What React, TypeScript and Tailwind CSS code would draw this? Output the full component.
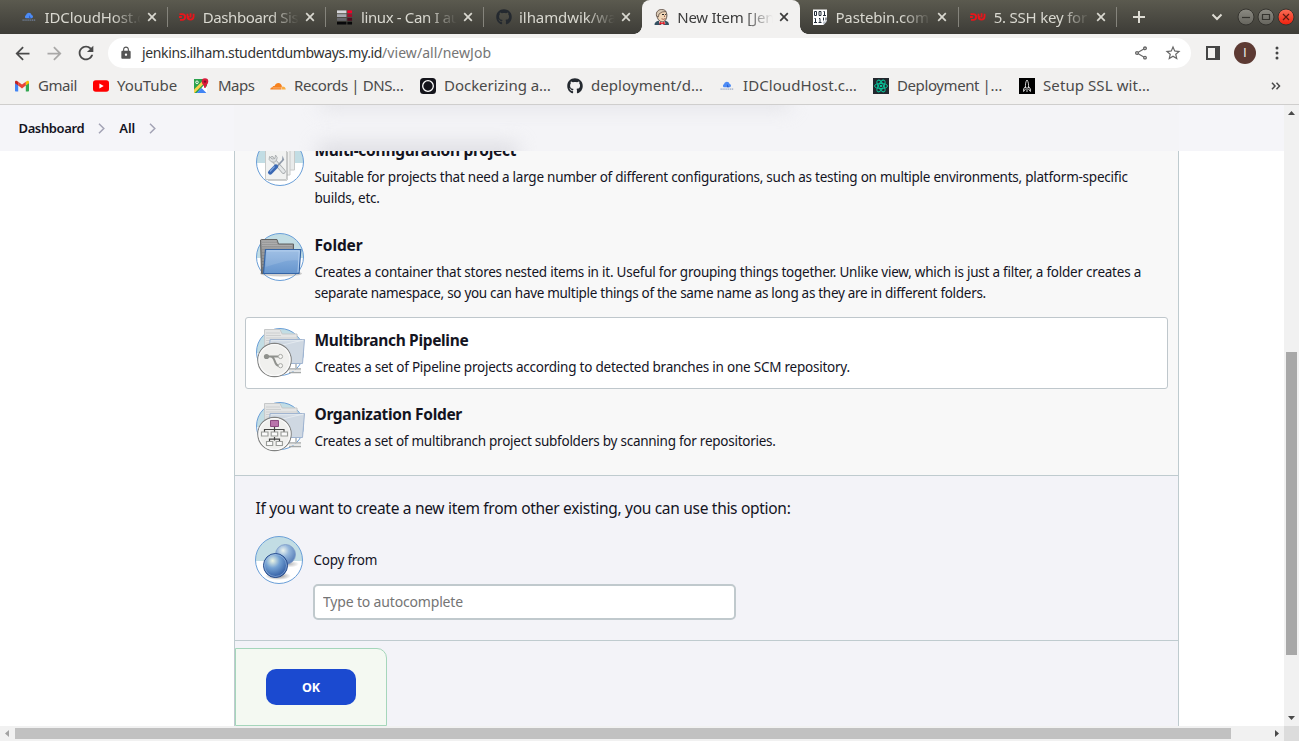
import type { ReactNode } from "react";
import { FaGithub } from "react-icons/fa";
import { MdArrowBack, MdArrowForward, MdLock, MdOutlineShare, MdRefresh, MdStarBorder } from "react-icons/md";

/* ---------- favicons ---------- */

const CloudHostIcon = () => (
  <svg width="16" height="16" viewBox="0 0 16 16">
    <path d="M4.800 9.200a1.700 1.700 0 0 1 .1-3A3 3 0 0 1 10.700 6a1.700 1.700 0 0 1 .3 3.200z" fill="#4c8bf5" />
    <path d="M8 6v3.200h2z" fill="#2a5fd0" />
    <path d="M1.500 11.200h13" stroke="#7d93b8" strokeWidth="1.800" strokeDasharray="1.300 .6" opacity=".55" />
  </svg>
);

const DumbwaysIcon = () => (
  <svg width="17" height="16" viewBox="0 0 17 16" fill="none" stroke="#e8151b" strokeWidth="1.900">
    <path d="M.5 5h3q3 0 3 3t-3 3H1M0 8h3" />
    <path d="M9 4.500v3q0 3.200 3.200 3.200t3.300-3.200v-3M12.300 4v4.500M9 7.800h2" />
  </svg>
);

const LinuxAskIcon = () => (
  <svg width="17" height="16" viewBox="0 0 17 16">
    <path d="M0 1h10v3H0z" fill="#d7d7dc" />
    <path d="M0 5h10v3H0z" fill="#a6a7ae" />
    <path d="M0 9h10v3H0z" fill="#66666b" />
    <path d="M0 13h10v3H0z" fill="#08080a" />
    <path d="M11 1h5v3h-5z" fill="#f5002a" />
    <path d="M11 5h5v3h-5z" fill="#a10d2a" />
    <path d="M11 9h5v3h-5z" fill="#491020" />
    <path d="M11 13h5v3h-5z" fill="#08080a" />
  </svg>
);

const JenkinsIcon = () => (
  <svg width="16" height="16" viewBox="0 0 16 16">
    <path d="M.5 16c0-2.500 1.500-3.600 4-4.200L11 11.600c2.500.7 4 1.900 4 4.400z" fill="#335061" />
    <path d="M5 11.500h5.500l1 3L8 16l-3-2z" fill="#fff" />
    <path d="M2.700 5.500C2.500 2.500 4.700 1 7.500 1s5.300 1.600 5.400 4.800c.1 3.400-1.500 7-4.600 7-3 0-5.400-3.300-5.600-7.300z" fill="#f0d6b7" stroke="#3a2d28" strokeWidth=".8" />
    <path d="M2.500 7C1.700 3 4 .5 7.600.5c2 0 3.700.7 4.600 2L8 3 5 5 4.300 8z" fill="#d9c9b4" stroke="#57453b" strokeWidth=".7" />
    <path d="M8 5.500h2M11.200 5.500h1" stroke="#222" strokeWidth="1" />
    <path d="M10.500 6.500v1.500M7.500 9.800q2 1.200 4-.3" fill="none" stroke="#8a4a3a" strokeWidth=".8" />
    <path d="M5.500 12.500l2.500 1.300 2.600-1.300.3 3.200L8 14.700l-2.500 1z" fill="#e01b24" />
  </svg>
);

const PastebinIcon = () => (
  <svg width="16" height="17" viewBox="0 0 16 17">
    <path d="M1 .5h14v11L11.500 16H1z" fill="#fff" />
    <g fill="none" stroke="#222c38" strokeWidth="1">
      <path d="M2.500 2.500h2v4h-2zM7 2.500h2v4H7zM11.500 2.500h1v4M11 6.500h3" />
      <path d="M2.500 9.500h1v4M2 13.500h3M7 9.500h1v4M6.500 13.500h3M11.500 8.500v3M14 8.500v3" />
    </g>
    <path d="M11 12.500h4L11.500 16z" fill="#b8bec6" />
  </svg>
);

const GmailIcon = () => (
  <svg width="16" height="16" viewBox="0 0 16 16">
    <path d="M1 3.800v8.700c0 .6.400 1 1 1h2.200V7.200z" fill="#4285f4" />
    <path d="M15 3.800v8.700c0 .6-.4 1-1 1h-2.200V7.200z" fill="#34a853" />
    <path d="M11.800 3.800L13 2.900c.9-.6 2-.1 2 1v1.300l-3.200 2.400z" fill="#fbbc04" />
    <path d="M4.200 7.600V3.800L8 6.600l3.800-2.800v3.800L8 10.400z" fill="#ea4335" />
    <path d="M1 3.900c0-1.100 1.100-1.600 2-1l1.200.9v3.800L1 5.200z" fill="#c5221f" />
  </svg>
);

const YouTubeIcon = () => (
  <svg width="16" height="16" viewBox="0 0 16 16">
    <rect y="2.300" width="16" height="11.500" rx="2.800" fill="#f00" />
    <path d="M6.400 5.500v5L10.700 8z" fill="#fff" />
  </svg>
);

const MapsIcon = () => (
  <svg width="16" height="16" viewBox="0 0 16 16">
    <path d="M0 1h10l3 5v9H0z" fill="#2ba24c" />
    <path d="M3 15L10.500 6.500 13 9v6z" fill="#fff" />
    <path d="M2.500 15L7.500 10l5 5z" fill="#4285f4" />
    <path d="M0 11.500L8.500 3l1.500 2.500L.5 15H0z" fill="#fbd14b" />
    <path d="M11 .3a3.300 3.300 0 0 1 3.300 3.300c0 2.600-2.400 3.400-2.700 6.400h-1.200c-.3-3-2.700-3.800-2.700-6.400A3.300 3.300 0 0 1 11 .3z" fill="#d91b3c" />
    <circle cx="11" cy="3.600" r="1.200" fill="#7d1024" />
    <circle cx="3" cy="4.300" r="1.300" fill="none" stroke="#fff" strokeWidth=".9" />
  </svg>
);

const CloudflareIcon = () => (
  <svg width="16" height="16" viewBox="0 0 16 16">
    <path d="M.3 11.500c0-1.500 1-2.200 2.200-2.200 0-1 1-1.700 2-1.200C5.300 5.900 6.800 5 8.300 5c2 0 3.300 1.400 3.600 3.200l-.8 3.300z" fill="#f6821f" />
    <path d="M11.400 11.500l.9-3.100c2-.1 3.400 1.200 3.400 3.100z" fill="#fbad41" />
    <path d="M3 9.900h8.500" stroke="#fff" strokeWidth=".5" opacity=".7" />
  </svg>
);

const DockerizingIcon = () => (
  <svg width="16" height="16" viewBox="0 0 16 16">
    <rect width="16" height="16" rx="3.500" fill="#14141b" />
    <circle cx="8" cy="8" r="5.300" fill="none" stroke="#fff" strokeWidth="1.300" />
  </svg>
);

const ReactIcon = () => (
  <svg width="16" height="16" viewBox="0 0 16 16">
    <path d="M0 0h16v16H0z" fill="#22272e" />
    <g fill="none" stroke="#09c199" strokeWidth="1">
      <ellipse cx="8" cy="8" rx="6.500" ry="2.600" />
      <ellipse cx="8" cy="8" rx="6.500" ry="2.600" transform="rotate(60 8 8)" />
      <ellipse cx="8" cy="8" rx="6.500" ry="2.600" transform="rotate(120 8 8)" />
    </g>
    <circle cx="8" cy="8" r="1.300" fill="#09c199" />
  </svg>
);

const RocketIcon = () => (
  <svg width="16" height="16" viewBox="0 0 16 16">
    <path d="M0 0h16v16H0z" fill="#000" />
    <path d="M8 2C6.600 3.800 6.300 6 6.500 10h3C9.700 6 9.400 3.800 8 2zM6.400 8.500L4.600 11v2.500L6.500 11M9.600 8.500l1.800 2.500v2.500L9.500 11M8 11v3" fill="none" stroke="#e8e8e8" strokeWidth=".9" />
  </svg>
);

/* ---------- browser chrome ---------- */

const Cross = () => (
  <svg width="10" height="10" viewBox="0 0 10 10" stroke="currentColor" strokeWidth="1.700">
    <path d="M1.200 1.200l7.600 7.600M8.800 1.200L1.200 8.800" />
  </svg>
);

const GitTab = () => <FaGithub size={16} color="#24292f" />;

type Tab = { icon: ReactNode; text: string; active?: boolean; line?: boolean; track: string };

const TABS: Tab[] = [
  { icon: <CloudHostIcon />, text: "IDCloudHost.c", line: true, track: "tracking-[-0.1px]" },
  { icon: <DumbwaysIcon />, text: "Dashboard Sis", line: true, track: "tracking-[-0.4px]" },
  { icon: <LinuxAskIcon />, text: "linux - Can I au", line: true, track: "tracking-[-0.36px]" },
  { icon: <GitTab />, text: "ilhamdwik/wa", track: "tracking-[-0.08px]" },
  { icon: <JenkinsIcon />, text: "New Item [Jen", active: true, track: "tracking-[-0.25px]" },
  { icon: <PastebinIcon />, text: "Pastebin.com", line: true, track: "tracking-[-0.15px]" },
  { icon: <DumbwaysIcon />, text: "5. SSH key for", line: true, track: "tracking-[-0.2px]" },
];

function TabItem({ tab }: { tab: Tab }) {
  return (
    <div
      className={
        "relative flex h-[34px] w-[158.2px] shrink-0 items-center pl-[11.5px] " +
        (tab.active ? "rounded-t-lg bg-[#f2f1f0] text-[#3c3c3c]" : "text-[#d9d8d0]")
      }
    >
      <span className="flex w-4 shrink-0 justify-center">{tab.icon}</span>
      <span
        className={
          "ml-[7.5px] w-[96px] shrink-0 text-[15px] leading-5 whitespace-nowrap [mask-image:linear-gradient(to_right,black_70%,transparent_100%)] " +
          tab.track
        }
      >
        {tab.text}
      </span>
      <span className="ml-[6px]">
        <Cross />
      </span>
      {tab.line && <span className="absolute top-[7px] right-0 h-5 w-px bg-[#85847c]" />}
      {tab.active && (
        <>
          <span className="absolute bottom-0 -left-2 size-2 bg-[radial-gradient(circle_at_0_0,transparent_7.500px,#f2f1f0_8px)]" />
          <span className="absolute -right-2 bottom-0 size-2 bg-[radial-gradient(circle_at_100%_0,transparent_7.500px,#f2f1f0_8px)]" />
        </>
      )}
    </div>
  );
}

function WindowButton({ kind }: { kind: "min" | "max" | "close" }) {
  return (
    <svg width="18" height="18" viewBox="0 0 18 18">
      <defs>
        <linearGradient id={"wb-" + kind} x1="0" y1="0" x2="0" y2="1">
          <stop offset="0" stopColor={kind === "close" ? "#fa7058" : "#8c8b83"} />
          <stop offset="1" stopColor={kind === "close" ? "#f01e0c" : "#65645d"} />
        </linearGradient>
      </defs>
      <circle cx="9" cy="9" r="8" fill={"url(#wb-" + kind + ")"} stroke="#35342f" strokeWidth="1" />
      <g fill="none" stroke={kind === "close" ? "#5d1a10" : "#35342f"} strokeWidth="1.200">
        {kind === "min" && <path d="M5 9.500h8" />}
        {kind === "max" && <path d="M5.500 6.500h7v5h-7z" />}
        {kind === "close" && <path d="M6 6l6 6M12 6l-6 6" />}
      </g>
    </svg>
  );
}

function TabStrip() {
  return (
    <div className="flex h-[34px] items-center bg-linear-to-b from-[#5b5a4f] to-[#3d3c37] pl-[9.5px]">
      {TABS.map((t) => (
        <TabItem key={t.text} tab={t} />
      ))}
      <svg className="ml-[15px] shrink-0" width="14" height="14" viewBox="0 0 14 14" stroke="#dedcd4" strokeWidth="2">
        <path d="M7 1v12M1 7h12" />
      </svg>
      <svg className="ml-[65px] shrink-0" width="12" height="8" viewBox="0 0 12 8" fill="none" stroke="#dedcd4" strokeWidth="2">
        <path d="M1.500 1.500L6 6l4.500-4.500" />
      </svg>
      <div className="ml-[14px] flex shrink-0 gap-[2px]">
        <WindowButton kind="min" />
        <WindowButton kind="max" />
        <WindowButton kind="close" />
      </div>
    </div>
  );
}

function Toolbar() {
  return (
    <div className="flex h-[38px] items-center bg-[#f2f1f0] pl-[11.5px] text-[#4a4a4a]">
      <MdArrowBack size={21} />
      <MdArrowForward size={21} className="ml-[11px] text-[#a9a8a7]" />
      <MdRefresh size={22} className="ml-[10.5px]" />
      <div className="ml-[11px] flex h-[30px] w-[1083px] shrink-0 items-center rounded-full bg-white pl-[11px]">
        <MdLock size={14} color="#555" />
        <span className="ml-[9px] flex w-[991px] shrink-0 text-[14px] leading-5 whitespace-nowrap">
          <span className="tracking-[-0.35px] text-[#333]">jenkins.ilham.studentdumbways.my.id</span>
          <span className="tracking-[0.05px] text-[#757575]">/view/all/newJob</span>
        </span>
        <MdOutlineShare size={16} className="shrink-0 text-[#666]" />
        <MdStarBorder size={18} className="ml-[15px] shrink-0 text-[#666]" />
      </div>
      <svg className="ml-[15px] shrink-0" width="14" height="14" viewBox="0 0 14 14">
        <path d="M1 1h12v12H1z" fill="none" stroke="#454545" strokeWidth="2" />
        <path d="M9 1h4v12H9z" fill="#454545" />
      </svg>
      <span className="ml-[14px] flex size-[22px] shrink-0 items-center justify-center rounded-full bg-[#5d3a33] font-['Roboto',sans-serif] text-[12px] text-[#eee]">
        I
      </span>
      <svg className="ml-[19px] shrink-0" width="4" height="14" viewBox="0 0 4 14" fill="#454545">
        <circle cx="2" cy="2" r="1.500" />
        <circle cx="2" cy="7" r="1.500" />
        <circle cx="2" cy="12" r="1.500" />
      </svg>
    </div>
  );
}

const BOOKMARKS = [
  { icon: <GmailIcon />, text: "Gmail", box: "w-[79px] tracking-[-0.42px]" },
  { icon: <YouTubeIcon />, text: "YouTube", box: "w-[101px] tracking-[-0.09px]" },
  { icon: <MapsIcon />, text: "Maps", box: "w-[76px] tracking-[-0.5px]" },
  { icon: <CloudflareIcon />, text: "Records | DNS…", box: "w-[150px] tracking-[-0.38px]" },
  { icon: <DockerizingIcon />, text: "Dockerizing a…", box: "w-[147px] tracking-[-0.03px]" },
  { icon: <FaGithub size={16} color="#24292f" />, text: "deployment/d…", box: "w-[152px] tracking-[0.07px]" },
  { icon: <CloudHostIcon />, text: "IDCloudHost.c…", box: "w-[154px] tracking-[0.08px]" },
  { icon: <ReactIcon />, text: "Deployment |…", box: "w-[146px] tracking-[-0.4px]" },
  { icon: <RocketIcon />, text: "Setup SSL wit…", box: "w-[140px] tracking-[0.09px]" },
];

function BookmarkBar() {
  return (
    <div className="flex h-[33px] items-center border-b border-[#cfcecd] bg-[#f2f1f0] pb-1 pl-[14px] text-[15px] leading-5 text-[#4a4a4a]">
      {BOOKMARKS.map((b) => (
        <span key={b.text} className={"flex shrink-0 items-center gap-2 whitespace-nowrap " + b.box}>
          <span className="shrink-0">{b.icon}</span>
          <span className="pb-[2px]">{b.text}</span>
        </span>
      ))}
      <svg className="ml-auto mr-[18px]" width="10" height="8" viewBox="0 0 10 8" fill="none" stroke="#4a4a4a" strokeWidth="1.500">
        <path d="M1 .8L4 4 1 7.200M5.500.8l3 3.200-3 3.200" />
      </svg>
    </div>
  );
}

/* ---------- page icons ---------- */

function Disc({ id, children }: { id: string; children: ReactNode }) {
  return (
    <svg className="shrink-0 overflow-visible" width="48" height="48" viewBox="0 0 48 48">
      <clipPath id={"disc-" + id}>
        <circle cx="24" cy="24" r="23.500" />
      </clipPath>
      <g clipPath={"url(#disc-" + id + ")"}>
        <path d="M0 0h48v48H0z" fill="#fff" />
        <path d="M0 0h48v25H0z" fill="#c2dde4" />
      </g>
      <circle cx="24" cy="24" r="23.500" fill="none" stroke="#6a9fd8" />
      {children}
    </svg>
  );
}

const MatrixIcon = () => (
  <Disc id="matrix">
    <g stroke="#c8cac9">
      <path d="M18 7h20.500v25H18z" fill="#e9ebeb" />
      <path d="M14 9h20v28H14z" fill="#eeefee" />
      <path d="M9.500 11.500h21v30h-21z" fill="#f1f2f1" />
    </g>
    <path d="M31.500 14v28M12 42.500h19" stroke="#9ea1a1" opacity=".5" />
    <path d="M16 20.500l11.500 13" stroke="#a4a8aa" strokeWidth="4.500" strokeLinecap="round" />
    <path d="M16 20.500l11.500 13" stroke="#e4e7e8" strokeWidth="3" strokeLinecap="round" />
    <path d="M13.500 18.500a4 4 0 1 0 6-1.500l-.5 3.500-3 .5z" fill="#dfe2e3" stroke="#a4a8aa" strokeWidth=".8" />
    <path d="M27 22l-6.500 7" stroke="#8d98a8" strokeWidth="1.800" />
    <path d="M26.500 17.500l1.800 4.500-2.300 1" fill="#8d98a8" />
    <path d="M20 28.500l-5.800 6" stroke="#3a68b3" strokeWidth="4.400" strokeLinecap="round" />
    <path d="M18.500 28.500l-4.500 5" stroke="#7ca3dd" strokeWidth="1.200" />
  </Disc>
);

const FolderIcon = () => (
  <Disc id="folder">
    <defs>
      <linearGradient id="folder-back" x1="0" y1="0" x2="0" y2="1">
        <stop offset="0" stopColor="#a0a0a0" />
        <stop offset="1" stopColor="#6d6d6d" />
      </linearGradient>
      <linearGradient id="folder-front" x1="0" y1="0" x2="0" y2="1">
        <stop offset="0" stopColor="#92b7e2" />
        <stop offset="1" stopColor="#6796ce" />
      </linearGradient>
    </defs>
    <ellipse cx="25" cy="40.500" rx="21" ry="3" fill="#888" opacity=".4" />
    <path d="M5.500 40.500l-1-33.500.8-.5H21l1.500 4.500H37.500V39z" fill="url(#folder-back)" stroke="#626262" />
    <path d="M6 8h14.500M6 10.500h15M6 12.500h30M6 15h30M6 18h4M6 21h4M6 24h4M6 27h4M6 30h3M6 33h3" stroke="#c0c0c0" strokeWidth=".7" opacity=".7" />
    <path d="M9.500 16.500h35.300L43 40.500H7.500z" fill="url(#folder-front)" stroke="#3565a6" strokeWidth="1.200" />
    <path d="M10.700 17.800h32.600L42 39.300" fill="none" stroke="#b9d2f0" strokeWidth=".9" />
    <path d="M10.500 18h32.500l-.7 9.500C32 26 23 30 9.500 34z" fill="#fff" opacity=".12" />
  </Disc>
);

function NetworkFolder({ id, children }: { id: string; children: ReactNode }) {
  return (
    <Disc id={id}>
      <path d="M40 36v4" stroke="#c3c6c6" strokeWidth="2" />
      <path d="M33 41h12M33 44.500h12" stroke="#a5a8a8" strokeWidth="1.300" />
      <path d="M33 42.500h12" stroke="#e8e9e9" strokeWidth="1.600" />
      <path d="M9 34L8.500 1.500H24l2.200 4.500H41v28z" fill="#e4e5e5" stroke="#c6c8c9" />
      <path d="M10 5h14M10 7.500h15M10 10h30M10 12.500h5M10 15h4" stroke="#cdcfd0" />
      <path d="M14 11.500h34.500l-2 24H12z" fill="#cfd8e2" stroke="#a0b4d0" />
      <path d="M15 12.700h32M14.500 20q16-4 33-8" fill="none" stroke="#e5ebf1" strokeWidth=".9" />
      <circle cx="18.500" cy="32" r="16.700" fill="#f0f0ee" stroke="#828382" strokeWidth="1.200" />
      <circle cx="18.500" cy="32" r="15.500" fill="none" stroke="#fafafa" strokeWidth="1.200" />
      {children}
    </Disc>
  );
}

const BranchIcon = () => (
  <NetworkFolder id="branch">
    <g fill="none" stroke="#8f918d" strokeWidth="2">
      <path d="M11 28.500h11.500M14.500 28.500c5.500 0 3 9.200 8.500 9.200" />
    </g>
    <circle cx="10.500" cy="28.500" r="2.600" fill="#8f918d" />
    <circle cx="24.500" cy="28.500" r="2.100" fill="#f5f5f3" stroke="#a8aaa6" />
    <circle cx="24.500" cy="37.700" r="2.100" fill="#f5f5f3" stroke="#a8aaa6" />
  </NetworkFolder>
);

const OrgIcon = () => (
  <NetworkFolder id="org">
    <g fill="none" stroke="#444" strokeWidth="1.200">
      <path d="M18.500 25v3.500M8.500 30v-2.500h19.500V30M18.500 28v3" />
      <path d="M18.500 35v3.500M13.500 39.500v-2.300h10v2.300" />
    </g>
    <path d="M14.500 18.500h8v6h-8z" fill="#b973ab" stroke="#8b4a80" />
    <g fill="#fafafa" stroke="#999b98" strokeWidth="1.100">
      <path d="M5.500 30h6.500v4H5.500zM15.200 30h6.500v4h-6.500zM25 30h6.500v4H25z" />
      <path d="M10.500 39.500h6.200v4h-6.200zM20.200 39.500h6.200v4h-6.200z" />
    </g>
  </NetworkFolder>
);

const CopyIcon = () => (
  <Disc id="copy">
    <defs>
      <radialGradient id="ball-far" cx=".38" cy=".3" r=".75">
        <stop offset="0" stopColor="#edf4ee" />
        <stop offset=".4" stopColor="#95b7dc" />
        <stop offset="1" stopColor="#5379b5" />
      </radialGradient>
      <radialGradient id="ball-near" cx=".38" cy=".3" r=".75">
        <stop offset="0" stopColor="#edf6e4" />
        <stop offset=".4" stopColor="#75a3d4" />
        <stop offset="1" stopColor="#28539d" />
      </radialGradient>
      <radialGradient id="ball-shadow">
        <stop offset="0" stopColor="#555" stopOpacity=".7" />
        <stop offset="1" stopColor="#555" stopOpacity="0" />
      </radialGradient>
    </defs>
    <ellipse cx="34" cy="28" rx="10" ry="3.500" fill="url(#ball-shadow)" opacity=".6" />
    <ellipse cx="23" cy="40" rx="13" ry="4" fill="url(#ball-shadow)" />
    <circle cx="30.500" cy="18.500" r="10" fill="url(#ball-far)" stroke="#7d9bc8" strokeWidth=".8" />
    <circle cx="20.500" cy="29.500" r="12" fill="url(#ball-near)" stroke="#24498b" />
    <circle cx="20.500" cy="29.500" r="11" fill="none" stroke="#a9c6e8" strokeWidth=".7" opacity=".8" />
  </Disc>
);

/* ---------- page ---------- */

type Item = { icon: ReactNode; title: string; titleTrack: string; lines: { text: string; track: string }[]; selected?: boolean };

const ITEMS: Item[] = [
  {
    icon: <MatrixIcon />,
    title: "Multi-configuration project",
    titleTrack: "tracking-[-0.3px]",
    lines: [
      {
        text: "Suitable for projects that need a large number of different configurations, such as testing on multiple environments, platform-specific",
        track: "tracking-[-0.243px]",
      },
      { text: "builds, etc.", track: "tracking-[-0.24px]" },
    ],
  },
  {
    icon: <FolderIcon />,
    title: "Folder",
    titleTrack: "tracking-[-0.14px]",
    lines: [
      {
        text: "Creates a container that stores nested items in it. Useful for grouping things together. Unlike view, which is just a filter, a folder creates a",
        track: "tracking-[-0.234px]",
      },
      {
        text: "separate namespace, so you can have multiple things of the same name as long as they are in different folders.",
        track: "tracking-[-0.296px]",
      },
    ],
  },
  {
    icon: <BranchIcon />,
    title: "Multibranch Pipeline",
    titleTrack: "tracking-[-0.33px]",
    selected: true,
    lines: [
      {
        text: "Creates a set of Pipeline projects according to detected branches in one SCM repository.",
        track: "tracking-[-0.232px]",
      },
    ],
  },
  {
    icon: <OrgIcon />,
    title: "Organization Folder",
    titleTrack: "tracking-[-0.33px]",
    lines: [
      { text: "Creates a set of multibranch project subfolders by scanning for repositories.", track: "tracking-[-0.257px]" },
    ],
  },
];

function ItemRow({ item }: { item: Item }) {
  return (
    <li
      className={
        "mb-[2px] flex gap-[10.5px] rounded-[3px] border px-[10px] pt-[10px] pb-[10px] " +
        (item.selected ? "border-[#bfc7cc] bg-white" : "border-transparent")
      }
    >
      {item.icon}
      <div className="whitespace-nowrap">
        <h3 className={"text-[15.5px] leading-6 font-bold " + item.titleTrack}>{item.title}</h3>
        <p className="mt-[5px] text-[13.5px] leading-[21px]">
          {item.lines.map((l) => (
            <span key={l.text} className={"block " + l.track}>
              {l.text}
            </span>
          ))}
        </p>
      </div>
    </li>
  );
}

const Chevron = () => (
  <svg width="7" height="11" viewBox="0 0 7 11" fill="none" stroke="#a3a3b5" strokeWidth="1.500">
    <path d="M1 .8l4.800 4.700L1 10.200" />
  </svg>
);

function Breadcrumbs() {
  return (
    <nav className="relative flex h-[46px] shrink-0 items-center overflow-hidden bg-[#f5f5f9] pl-[18.5px] text-[13px] font-semibold">
      <span className="absolute inset-y-0 left-[234px] w-[945px] bg-[#f4f4f7]" />
      <span className="absolute -top-4 left-[320px] h-5 w-[470px] bg-[#d9d9de] opacity-60 blur-[10px]" />
      <span className="absolute -bottom-4 left-[318px] h-6 w-[200px] bg-[#cfcfd6] opacity-60 blur-[10px]" />
      <span className="relative pt-px tracking-[-0.38px]">Dashboard</span>
      <span className="relative ml-[14px]">
        <Chevron />
      </span>
      <span className="relative ml-[14px] pt-px">All</span>
      <span className="relative ml-[14px]">
        <Chevron />
      </span>
    </nav>
  );
}

function Page() {
  return (
    <div className="flex min-w-0 flex-1 flex-col overflow-hidden bg-white text-[#14141f]">
      <Breadcrumbs />
      <main className="ml-[234px] flex h-[575px] w-[945px] flex-col overflow-hidden border-x border-[#bfcbcf] bg-[#f3f3f8]">
        <div className="h-[324px] shrink-0 overflow-hidden bg-[#f8f8f8] px-[10px]">
          <ul className="-mt-[24px]">
            {ITEMS.map((i) => (
              <ItemRow key={i.title} item={i} />
            ))}
          </ul>
        </div>
        <section className="h-[165px] shrink-0 border-t border-[#bfcbcf] px-5">
          <p className="mt-[20px] pl-[0.5px] text-[15.5px] leading-6 tracking-[-0.3px]">
            If you want to create a new item from other existing, you can use this option:
          </p>
          <div className="mt-4 flex items-center gap-[10.5px]">
            <CopyIcon />
            <span className="text-[13.5px] tracking-[-0.25px]">Copy from</span>
          </div>
          <input
            className="ml-[58px] block h-9 w-[423px] rounded-[5px] border-2 border-[#c0c9cd] bg-white px-2 pb-[2px] text-[14px] tracking-[-0.17px] placeholder:text-[#757575]"
            placeholder="Type to autocomplete"
          />
        </section>
        <footer className="border-t border-[#bfcbcf] pt-[7px]">
          <div className="flex h-[78px] w-[152px] rounded-tr-[10px] border border-[#a5d6bb] bg-[#f4f9f2] pt-[20px] pl-[30px]">
            <button className="h-9 w-[90px] rounded-[10px] bg-[#1b4ad0] pt-[2px] text-[12.5px] font-bold text-white">OK</button>
          </div>
        </footer>
      </main>
    </div>
  );
}

function VerticalScrollbar() {
  return (
    <div className="flex w-[15px] shrink-0 flex-col items-center bg-[#f1f1f1]">
      <svg className="mt-[6px]" width="7" height="4" viewBox="0 0 7 4" fill="#4a4a4a">
        <path d="M0 4h7L3.500 0z" />
      </svg>
      <div className="mt-[237px] h-[303px] w-[11px] bg-[#a8a8a8]" />
      <svg className="mt-[61px]" width="7" height="4" viewBox="0 0 7 4" fill="#4a4a4a">
        <path d="M0 0h7L3.500 4z" />
      </svg>
    </div>
  );
}

function HorizontalScrollbar() {
  return (
    <div className="flex h-[15px] items-center bg-[#f1f1f1]">
      <svg className="ml-[5px]" width="4" height="7" viewBox="0 0 4 7" fill="#a3a3a3">
        <path d="M4 0v7L0 3.500z" />
      </svg>
      <div className="ml-[6px] h-[11px] w-[1216px] bg-[#c1c1c1]" />
      <svg className="ml-[44px]" width="4" height="7" viewBox="0 0 4 7" fill="#4a4a4a">
        <path d="M0 0v7l4-3.500z" />
      </svg>
      <div className="ml-auto h-[15px] w-[15px] bg-[#dcdcdc]" />
    </div>
  );
}

export default function App() {
  return (
    <div className="flex h-[741px] w-[1299px] flex-col overflow-hidden font-['Noto_Sans',sans-serif]">
      <TabStrip />
      <Toolbar />
      <BookmarkBar />
      <div className="flex h-[621px] shrink-0">
        <Page />
        <VerticalScrollbar />
      </div>
      <HorizontalScrollbar />
    </div>
  );
}
